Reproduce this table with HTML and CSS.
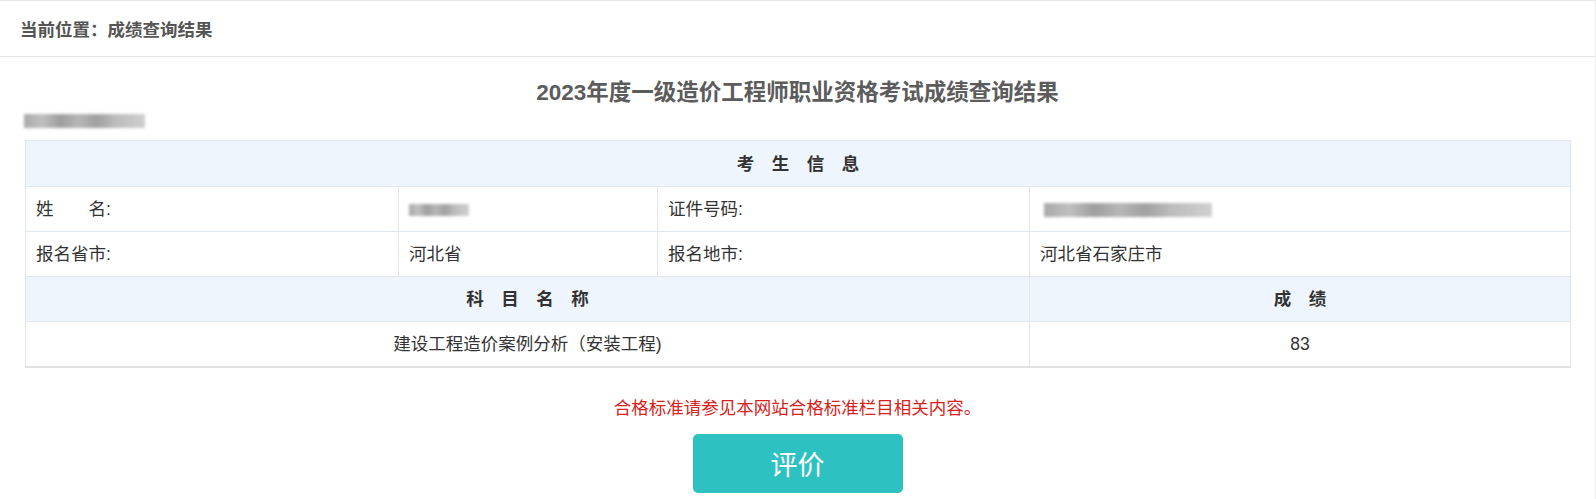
FILE: index.html
```html
<!DOCTYPE html>
<html lang="zh-CN">
<head>
<meta charset="utf-8">
<title>成绩查询结果</title>
<link rel="stylesheet" href="styles.css">
</head>
<body>
<div class="page">
  <div class="crumb">当前位置：成绩查询结果</div>
  <div class="main">
    <h1 class="title">2023年度一级造价工程师职业资格考试成绩查询结果</h1>
    <div class="blur blur-top"></div>
    <table class="info">
      <colgroup>
        <col class="c1"><col class="c2"><col class="c3"><col class="c4">
      </colgroup>
      <tr class="head first"><td colspan="4"><span class="sp">考生信息</span></td></tr>
      <tr><td>姓　　名:</td><td><span class="blur blur-name"></span></td><td>证件号码:</td><td><span class="blur blur-id"></span></td></tr>
      <tr><td>报名省市:</td><td>河北省</td><td>报名地市:</td><td>河北省石家庄市</td></tr>
      <tr class="head"><td colspan="3"><span class="sp">科目名称</span></td><td><span class="sp">成绩</span></td></tr>
      <tr class="score"><td colspan="3">建设工程造价案例分析（安装工程)</td><td>83</td></tr>
    </table>
    <p class="note">合格标准请参见本网站合格标准栏目相关内容。</p>
    <div class="actions"><button class="btn" type="button">评价</button></div>
  </div>
</div>
</body>
</html>
```

FILE: styles.css
```css
* { box-sizing: border-box; }
html, body { margin: 0; padding: 0; background: #fff; }
body {
  font-family: "Liberation Sans", "Noto Sans CJK SC", sans-serif;
  font-size: 17.5px;
  color: #333;
  overflow: hidden;
}
.page {
  width: 1596px;
  height: 499px;
  border-top: 1px solid #e6e6e6;
  border-right: 1px solid #ececec;
}
.crumb {
  height: 56px;
  border-bottom: 1px solid #e4e4e4;
  padding-left: 20px;
  display: flex;
  align-items: center;
  font-weight: bold;
  font-size: 17.5px;
  color: #555;
}
.main {
  padding: 0 25px;
}
.title {
  margin: 21px 0 0;
  text-align: center;
  font-size: 22.5px;
  line-height: 30px;
  font-weight: bold;
  color: #5c5c5c;
}
.blur {
  display: inline-block;
  background: linear-gradient(90deg, #9a9a9a 0%, #b5b5b5 15%, #8e8e8e 30%, #aaaaaa 45%, #909090 60%, #b0b0b0 75%, #c8c8c8 100%);
  filter: blur(1.5px);
  opacity: 0.85;
}
.blur-top {
  display: block;
  width: 121px;
  height: 14px;
  margin: 6px 0 12px -1px;
}
.blur-name {
  width: 60px;
  height: 12px;
  vertical-align: middle;
}
.blur-id {
  width: 168px;
  height: 14px;
  vertical-align: middle;
  margin-left: 4px;
}
.info {
  width: 100%;
  border-collapse: collapse;
  table-layout: fixed;
  border: 1px solid #dfe5ec;
  border-bottom: 2px solid #e2e2e2;
}
.c1 { width: 373px; }
.c2 { width: 259px; }
.c3 { width: 372px; }
.c4 { width: 541px; }
.info td {
  border: 1px solid #e1e7ee;
  height: 45px;
  padding: 0 10px;
  line-height: 24px;
  vertical-align: middle;
}
.info tr.head td {
  background: #eef5fc;
  text-align: center;
  font-weight: bold;
  color: #333;
}
.info tr.first td {
  height: 46px;
}
.sp {
  letter-spacing: 1em;
  padding-left: 1em;
}
.info tr.score td {
  text-align: center;
}
.note {
  margin: 28px 0 0;
  text-align: center;
  line-height: 24px;
  font-size: 17.5px;
  color: #d5231b;
}
.actions {
  margin-top: 14px;
  display: flex;
  justify-content: center;
}
.btn {
  width: 210px;
  height: 59px;
  border: 0;
  border-radius: 5px;
  background: #2ec1c1;
  color: #fff;
  font-family: "Noto Sans CJK SC", sans-serif;
  font-size: 27px;
  cursor: pointer;
}
```
